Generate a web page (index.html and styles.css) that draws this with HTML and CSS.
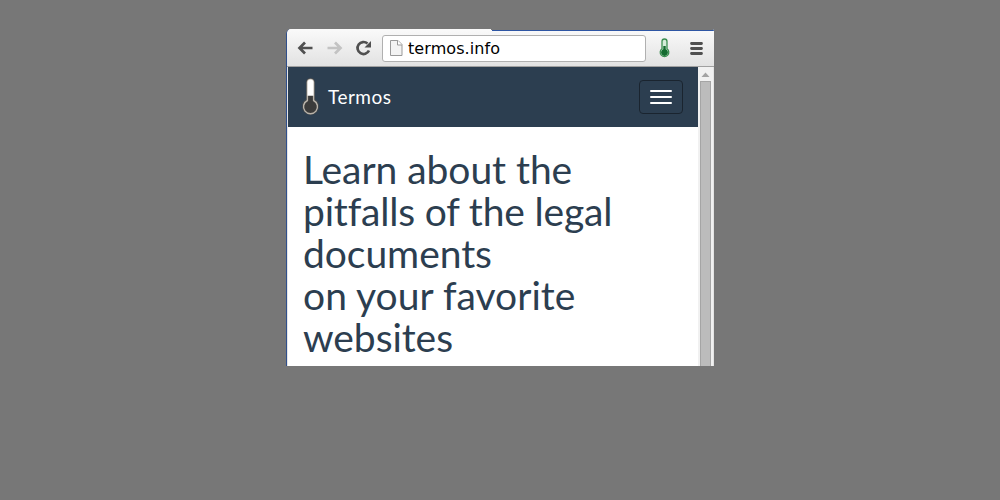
FILE: index.html
```
<!DOCTYPE html>
<html lang="en">
<head>
<meta charset="utf-8">
<title>Termos</title>
<link rel="stylesheet" href="styles.css">
</head>
<body>
<main class="window">
  <header class="toolbar">
    <svg class="nav-icon" width="18" height="18" viewBox="0 0 18 18"><path d="M2 9H15.500M8 3.500 2.500 9l5.500 5.500" fill="none" stroke="#505050" stroke-width="2.700"/></svg>
    <svg class="nav-icon" width="18" height="18" viewBox="0 0 18 18"><path d="M1.500 9H14.500M9 3.500 14.500 9l-5.500 5.500" fill="none" stroke="#c3c3c3" stroke-width="2.700"/></svg>
    <svg class="nav-icon" width="18" height="18" viewBox="0 0 18 18"><path d="M14 11.500a6 6 0 1 1-1.500-7" fill="none" stroke="#505050" stroke-width="2.700"/><path d="M16 2v6.500H9.500z" fill="#505050"/></svg>
    <div class="address">
      <svg width="13" height="16" viewBox="0 0 13 16"><path d="M.5.500h7.500l4 4v11H.5z" fill="#f3f3f3" stroke="#999"/><path d="M7.500.500v4.500H12" fill="#fff" stroke="#999"/></svg>
      <span class="url">termos.info</span>
    </div>
    <svg class="extension" width="12" height="20" viewBox="0 0 12 20"><path d="M3 3.500a2.500 2.500 0 0 1 5 0v7.300a4.300 4.300 0 1 1-5 0z" fill="#d5edda" stroke="#3b8e50" stroke-width="1.300"/><path d="M4.300 8h2.400v3.300a3.400 3.400 0 1 1-2.400 0z" fill="#146b30"/></svg>
    <svg class="menu" width="14" height="13" viewBox="0 0 14 13"><path d="M1.500 1.500h10M1.500 6.500h10M1.500 11.500h10" stroke="#505050" stroke-width="2.800" stroke-linecap="round"/></svg>
  </header>
  <div class="viewport">
    <div class="page">
      <nav class="navbar">
        <svg width="18" height="38" viewBox="0 0 18 38"><path d="M4 4.300a4.500 4.500 0 0 1 9 0V21a8.600 8.600 0 1 1-9 0z" fill="#41464b"/><path d="M5.400 4.500a3.100 3.100 0 0 1 6.200 0V22.500a7 7 0 1 1-6.200 0z" fill="#3b3b3b" stroke="#b9b3aa" stroke-width="1.400"/><path d="M5.500 4.500a3 3 0 0 1 6 0v13.200h-6z" fill="#fff"/></svg>
        <span class="brand">Termos</span>
        <button class="toggle" aria-label="Menu"><i></i><i></i><i></i></button>
      </nav>
      <h1 class="headline">Learn about the<br><span class="tight">pitfalls of the legal</span><br>documents<br><span class="normal">on your favorite</span><br>websites</h1>
    </div>
    <div class="scrollbar">
      <svg width="15" height="14" viewBox="0 0 15 14"><path d="M3.500 10 7.500 5.500 11.500 10z" fill="#a3a3a3"/></svg>
      <div class="thumb"></div>
    </div>
  </div>
</main>
</body>
</html>
```
FILE: styles.css
```
* { box-sizing: border-box; }
body {
  margin: 0;
  height: 500px;
  padding-top: 29px;
  background: #777;
  overflow: hidden;
}
.window {
  width: 428px;
  height: 337px;
  margin: 0 auto;
  display: flex;
  flex-direction: column;
  border-left: 1px solid #2f4f8c;
  border-radius: 5px 2px 0 0;
  background: #e4e4e4;
  overflow: hidden;
}
.toolbar {
  height: 38px;
  flex: none;
  display: flex;
  align-items: center;
  padding-left: 10px;
  border-bottom: 1px solid #a0a0a0;
  background:
    linear-gradient(#777, #777) 204px 0 / 223px 1px no-repeat,
    linear-gradient(#2e56a4, #2e56a4) 205px 0 / 222px 2px no-repeat,
    linear-gradient(#fafafa, #e2e2e2);
}
.nav-icon { flex: none; margin-right: 11px; }
.address {
  width: 264px;
  height: 27px;
  margin: 1px 0 0 -2px;
  display: flex;
  align-items: center;
  padding-left: 7px;
  border: 1px solid #b0b0b0;
  border-radius: 3px;
  background: #fff;
}
.url {
  margin: 2px 0 0 5px;
  font: 16px/24px "DejaVu Sans", sans-serif;
  letter-spacing: 0.08px;
  color: #000;
}
.extension { margin-left: 13px; }
.menu { margin: 1px 0 0 19px; }
.viewport {
  flex: 1;
  display: flex;
  padding: 0 1px;
}
.page { width: 410px; background: #fff; }
.navbar {
  height: 60px;
  display: flex;
  align-items: center;
  padding: 0 15px 0 14px;
  background: #2c3e50;
}
.brand {
  margin-left: 8px;
  font: 19px/24px Lato, sans-serif;
  letter-spacing: 0.5px;
  color: #fff;
}
.toggle {
  width: 44px;
  height: 34px;
  margin-left: auto;
  display: flex;
  flex-direction: column;
  align-items: center;
  justify-content: center;
  gap: 4px;
  padding: 0;
  border: 1px solid #1a242f;
  border-radius: 4px;
  background: none;
}
.toggle i { width: 22px; height: 2px; border-radius: 1px; background: #fff; }
.headline {
  margin: 21px 0 0;
  padding-left: 15px;
  font: 400 39px/42px Lato, sans-serif;
  font-variant-ligatures: none;
  letter-spacing: -0.05px;
  color: #2c3e50;
  white-space: nowrap;
}
.tight { letter-spacing: -0.18px; }
.normal { letter-spacing: 0.03px; }
.scrollbar {
  width: 15px;
  display: flex;
  flex-direction: column;
  background: #f1f1f1;
}
.thumb {
  flex: 1;
  width: 11px;
  margin-left: 2px;
  border: 1px solid #a5a5a5;
  border-bottom: 0;
  background: #bcbcbc;
}
```
